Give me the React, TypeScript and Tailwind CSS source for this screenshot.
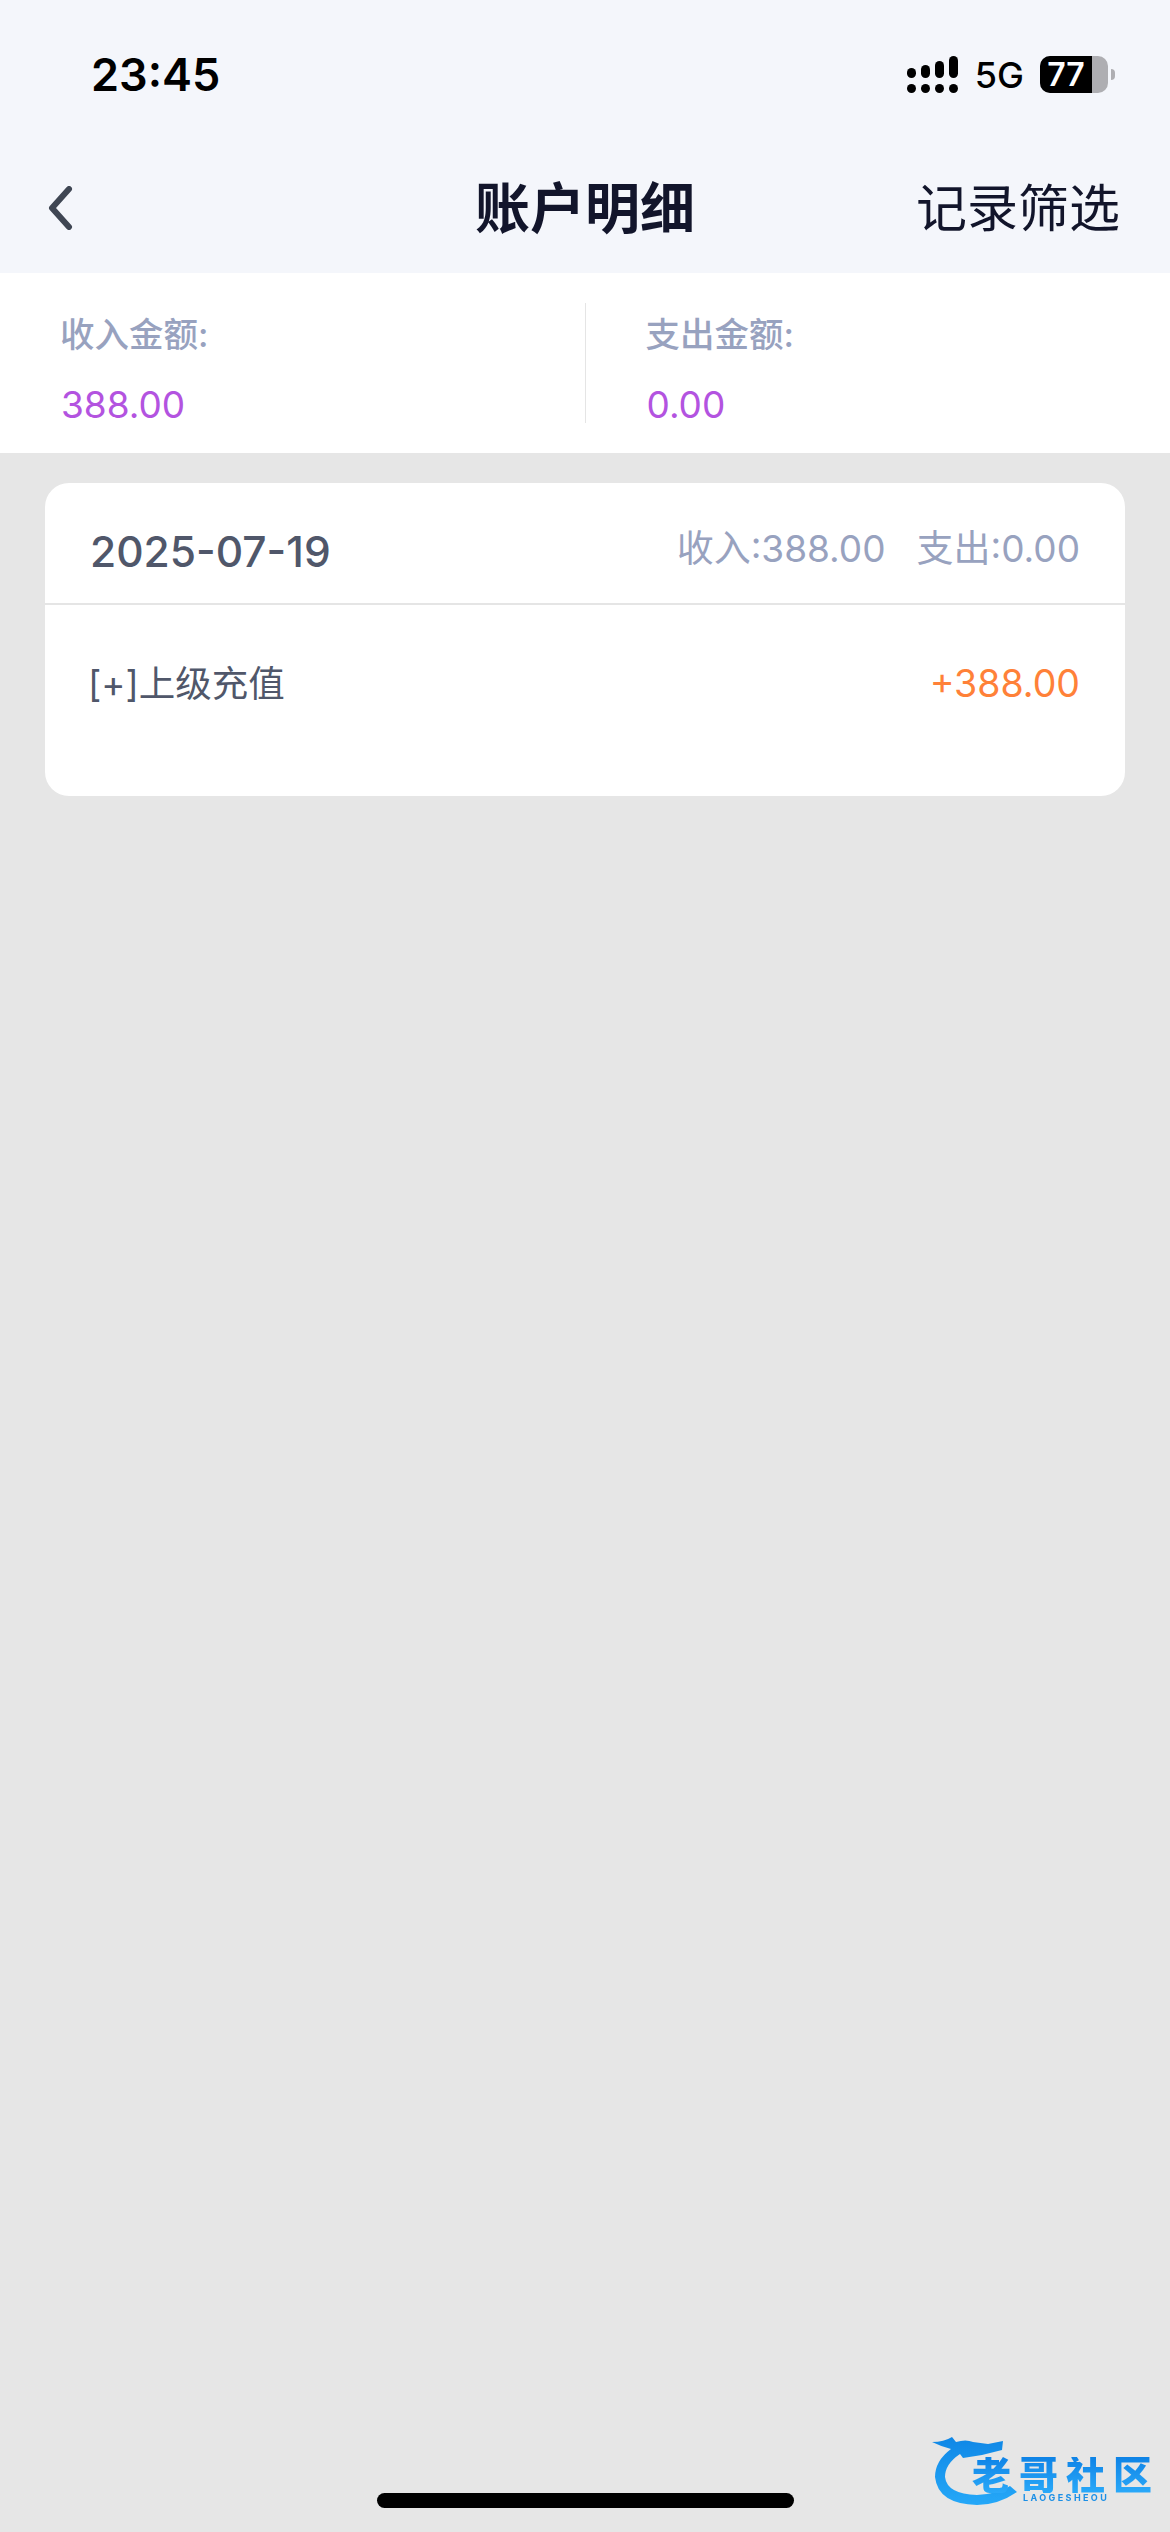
function StatusBar() {
  return (
    <div className="flex h-[116px] items-center justify-between pl-[91px] pr-[55px] pt-[33px]">
      <span className="text-[45px] leading-none font-semibold text-black">23:45</span>
      <div className="flex items-center">
        <svg width="51" height="38" viewBox="0 0 51 38" fill="#000">
          <rect x="0" y="12" width="9" height="10" rx="4.5" />
          <rect x="14" y="9" width="9" height="13" rx="4.5" />
          <rect x="28" y="5" width="9" height="17" rx="4.5" />
          <rect x="42" y="0" width="9" height="22" rx="4.5" />
          <rect x="0" y="28" width="9" height="9" rx="4.5" />
          <rect x="14" y="28" width="9" height="9" rx="4.5" />
          <rect x="28" y="28" width="9" height="9" rx="4.5" />
          <rect x="42" y="28" width="9" height="9" rx="4.5" />
        </svg>
        <span className="ml-[17px] text-[36px] leading-none font-medium text-black">5G</span>
        <div className="ml-[16px] flex h-[37px] w-[68px] overflow-hidden rounded-[10px] bg-[#aeaeb2]">
          <div className="flex h-full w-[52px] items-center justify-center bg-black text-[32px] leading-none font-semibold text-white">
            77
          </div>
        </div>
        <div className="ml-[3px] h-[11px] w-[4px] rounded-r-full bg-[#aeaeb2]" />
      </div>
    </div>
  );
}

function NavBar() {
  return (
    <div className="relative flex h-[157px] items-center justify-between pt-[27px] pl-[48px] pr-[50px]">
      <svg width="25" height="44" viewBox="0 0 25 44" fill="none">
        <path d="M21 3 L4 22 L21 41" stroke="#3f4653" strokeWidth="6" strokeLinecap="round" strokeLinejoin="round" />
      </svg>
      <span className="absolute left-1/2 -translate-x-1/2 text-[55px] leading-none font-semibold text-[#12152b]">
        账户明细
      </span>
      <span className="text-[51px] leading-none text-[#12152b]">记录筛选</span>
    </div>
  );
}

function Stat({ label, value }: { label: string; value: string }) {
  return (
    <div className="flex flex-1 flex-col pl-[61px] pt-[15px]">
      <span className="-ml-px text-[34.5px] leading-none font-medium text-[#98a2bf]">{label}</span>
      <span className="mt-[34px] text-[37px] leading-none text-[#b353e0]">{value}</span>
    </div>
  );
}

function SummaryPanel() {
  return (
    <div className="flex h-[180px] items-center bg-white">
      <div className="flex h-[120px] w-full items-center">
        <Stat label="收入金额:" value="388.00" />
        <div className="h-full w-px bg-[#e5e5e5]" />
        <Stat label="支出金额:" value="0.00" />
      </div>
    </div>
  );
}

function DayCard() {
  return (
    <div className="mx-[45px] mt-[30px] h-[313px] rounded-[24px] bg-white">
      <div className="flex h-[122px] items-center justify-between border-b-2 border-[#e5e5e5] pl-[45px] pr-[45px] pt-[18px]">
        <span className="text-[42.5px] leading-none font-medium text-[#50576a]">2025-07-19</span>
        <div className="mb-[8px] flex gap-[31px] text-[37px] leading-none text-[#98a2bf]">
          <span>收入:388.00</span>
          <span>支出:0.00</span>
        </div>
      </div>
      <div className="flex items-center justify-between pl-[43px] pr-[45px] pt-[60px]">
        <span className="text-[36.5px] leading-none text-[#50576a]">[+]上级充值</span>
        <span className="text-[37.5px] leading-none text-[#ff8138]">+388.00</span>
      </div>
    </div>
  );
}

function Watermark() {
  return (
    <div className="absolute left-[932px] top-[2436px] h-[72px] w-[224px] blur-[0.7px]">
      <svg className="absolute inset-0" width="224" height="72" viewBox="0 0 224 72">
        <defs>
          <linearGradient id="dragon" x1="0" y1="0" x2="0" y2="1">
            <stop offset="0" stopColor="#0f87e6" />
            <stop offset="1" stopColor="#25a8f8" />
          </linearGradient>
        </defs>
        <path
          d="M0 6 Q12 6 20 1 L24 6 Q34 3 41 6 L56 8 L71 5 L70 14 L50 19 L31 22 L28 18 Q13 28 13 41 Q15 58 45 59 Q66 58 78 50 L85 56 Q66 69 45 69 Q6 68 3 41 Q3 25 19 13 Q8 10 0 6Z"
          fill="url(#dragon)"
        />
      </svg>
      <span className="absolute left-[40px] top-[21px] h-[36px] bg-gradient-to-b from-[#0e83e6] to-[#2aa9f9] bg-clip-text text-[39px] leading-[36px] font-black tracking-[8px] whitespace-nowrap text-transparent">
        老哥社区
      </span>
      <span className="absolute left-[91px] top-[57px] text-[9px] leading-none font-bold tracking-[2.4px] whitespace-nowrap text-[#1b8fe6]">
        LAOGESHEOU
      </span>
    </div>
  );
}

export default function App() {
  return (
    <div
      className="relative h-[2532px] w-[1170px] overflow-hidden bg-[#e6e6e6]"
      style={{ fontFamily: 'Inter, "Noto Sans CJK SC", sans-serif' }}
    >
      <div className="bg-[#f4f6fb]">
        <StatusBar />
        <NavBar />
      </div>
      <SummaryPanel />
      <DayCard />
      <Watermark />
      <div className="absolute bottom-[24px] left-[377px] h-[15px] w-[417px] rounded-full bg-black" />
    </div>
  );
}
